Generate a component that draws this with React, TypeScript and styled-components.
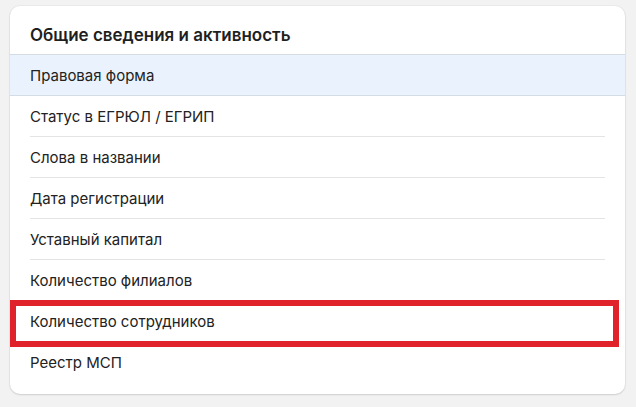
import styled, {createGlobalStyle} from 'styled-components';

const GlobalStyle = createGlobalStyle`
  html, body {
    margin: 0;
    padding: 0;
    background: #f2f2f3;
    font-family: Inter, "Noto Sans", sans-serif;
    color: #212121;
  }
`;

const items = [
  'Правовая форма',
  'Статус в ЕГРЮЛ / ЕГРИП',
  'Слова в названии',
  'Дата регистрации',
  'Уставный капитал',
  'Количество филиалов',
  'Количество сотрудников',
  'Реестр МСП',
];

const Page = styled.div`
  padding: 6px 11px 13px 10px;
`;

const Card = styled.section`
  position: relative;
  background: #fff;
  border-radius: 10px;
  box-shadow: 0 1px 2px rgba(0, 0, 0, 0.12), 0 0 0 1px rgba(0, 0, 0, 0.03);
  padding-bottom: 11px;
`;

const Title = styled.h3`
  margin: 0;
  height: 48px;
  box-sizing: border-box;
  display: flex;
  align-items: center;
  padding: 9px 20px 0;
  font-size: 17px;
  font-weight: 600;
  color: #1f1f1f;
`;

const List = styled.ul`
  list-style: none;
  margin: 0;
  padding: 0;
`;

const Row = styled.li<{$active?: boolean}>`
  position: relative;
  height: ${(p) => (p.$active ? '42px' : '41px')};
  display: flex;
  align-items: center;
  padding: 0 20px;
  font-size: 15px;
  color: #222;
  background: ${(p) => (p.$active ? '#eaf3fd' : 'transparent')};
  border-top: ${(p) => (p.$active ? '1px solid #d3dbe3' : 'none')};
  border-bottom: ${(p) => (p.$active ? '1px solid #d3dbe3' : 'none')};
  box-sizing: border-box;

  &:not(:last-child)::after {
    content: '';
    display: ${(p) => (p.$active ? 'none' : 'block')};
    position: absolute;
    left: 20px;
    right: 20px;
    bottom: 0;
    height: 1px;
    background: #e4e4e6;
  }
`;

const Marker = styled.div`
  position: absolute;
  left: 0;
  top: 294px;
  width: 609px;
  height: 47px;
  border: 6px solid #e0222b;
  box-sizing: border-box;
  pointer-events: none;
`;

export default function App() {
  return (
    <>
      <GlobalStyle />
      <Page>
        <Card>
          <Title>Общие сведения и активность</Title>
          <List>
            {items.map((item, i) => (
              <Row key={item} $active={i === 0}>
                {item}
              </Row>
            ))}
          </List>
          <Marker />
        </Card>
      </Page>
    </>
  );
}
